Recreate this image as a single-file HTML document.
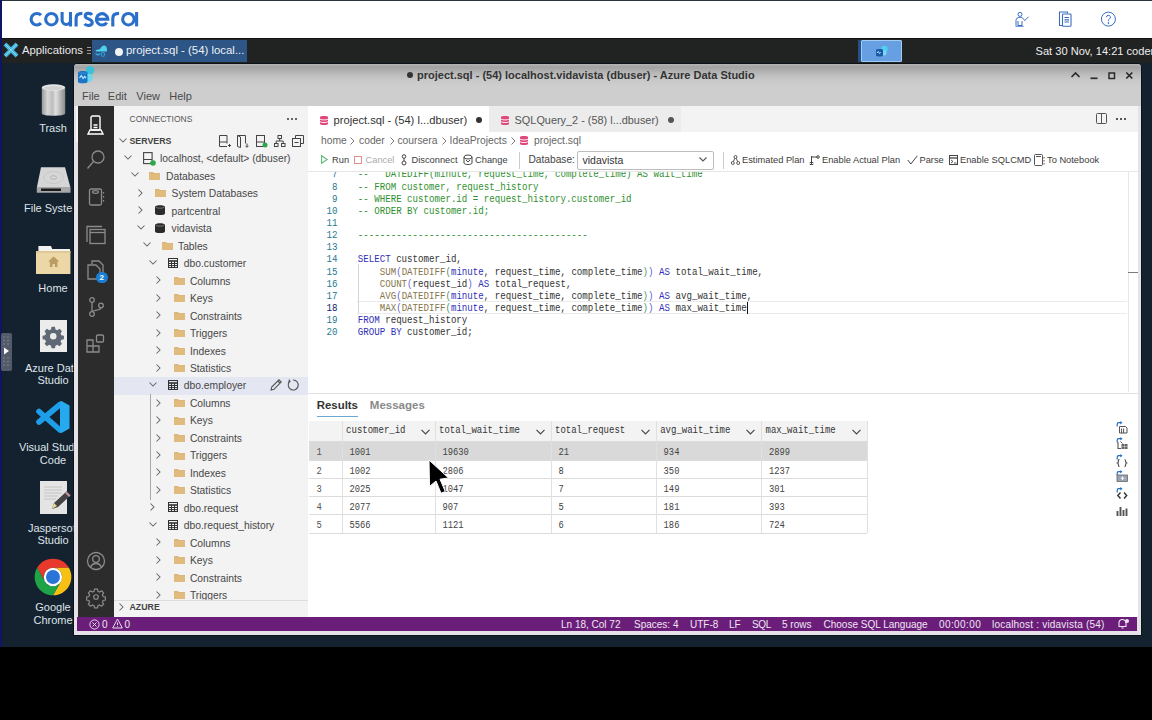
<!DOCTYPE html>
<html><head><meta charset="utf-8">
<style>
*{margin:0;padding:0;box-sizing:border-box}
html,body{width:1152px;height:720px;overflow:hidden;background:#000;font-family:"Liberation Sans",sans-serif;position:relative}
.a{position:absolute}
.t{position:absolute;white-space:pre;line-height:14px;height:14px}
.m{font-family:"Liberation Mono",monospace}
svg{position:absolute;overflow:visible}
#top{left:0;top:0;width:1152px;height:38px;background:#fff;border-top:1px solid #2a3540}
#task{left:0;top:38px;width:1152px;height:25px;background:#212222;border-top:1.5px solid #131313}
#desk{left:0;top:62px;width:1152px;height:585px;background:#142230}
#leftline{left:0;top:0;width:2px;height:647px;background:#0f1560}
.dl{color:#dfe3e8;font-size:11px;text-align:center;width:80px;left:13px}
/* window */
#win{left:74px;top:63.5px;width:1067px;height:571.5px;background:#e6e3e8;border-radius:4px 4px 0 0;box-shadow:0 0 0 1px rgba(0,0,0,.45)}
#title{left:74px;top:63.5px;width:1067px;height:22.5px;background:linear-gradient(#b4b4b4 0,#a2a2a2 14%,#bababa 45%,#c8c8c8 72%,#cdcdcd 100%);border-radius:3px 3px 0 0}
#menu{left:74px;top:86px;width:1067px;height:20px;background:#cecece}
#act{left:78px;top:106px;width:36px;height:511px;background:#2c2c2c}
#side{left:114px;top:106px;width:194px;height:511px;background:#f3f3f3}
#editor{left:308px;top:106px;width:830px;height:511px;background:#fff}
#status{left:77px;top:617px;width:1060px;height:14px;background:#6a1e7a}
.mn{font-size:11px;color:#4a4a4a;top:88.8px}
</style></head><body>
<div class="a" id="desk"></div>
<div class="a" id="top"></div>
<div class="a" id="task"></div>
<div class="a" id="leftline"></div>

<!-- coursera header -->
<svg style="left:0;top:0" width="150" height="38" viewBox="0 0 150 38" fill="none" stroke="#2a6fc9" stroke-width="3.1"><path d="M41 15.2A5.75 5.75 0 1 0 41 23.2"/><circle cx="51.4" cy="19.2" r="5.75"/><path d="M62.1 12V20.3A4.2 4.2 0 0 0 70.5 20.3M70.5 12V26.4"/><path d="M76.1 26.4V18.2Q76.1 13.4 82.4 13.4"/><path d="M92 14.8C90.6 12.9 85.2 12.6 85.2 15.9C85.2 19.2 92.3 18.5 92.3 22.6C92.3 26.1 86.3 26.1 84.6 23.9"/><path d="M96.4 19.2H107.8A5.7 5.7 0 1 0 106.8 22.6"/><path d="M112.8 26.4V18.2Q112.8 13.4 119.1 13.4"/><circle cx="128.4" cy="19.2" r="5.75"/><path d="M136.6 12V26.4"/></svg>
<svg style="left:1013px;top:11px" width="18" height="17" viewBox="0 0 18 17" fill="none" stroke="#3a6cc4" stroke-width="1"><circle cx="7" cy="3.4" r="2"/><path d="M3 14.5V9.5c0-2 1.5-3.3 4-3.3 1.6 0 2.6.6 3.3 1.6l1.5 1.8 3.7-3.8"/><path d="M5 10v4.5h4V10"/><path d="M2.5 15.2h8"/></svg>
<svg style="left:1058px;top:11px" width="15" height="16" viewBox="0 0 15 16" fill="none" stroke="#3a6cc4" stroke-width="1.1"><path d="M4 14.5H1.5V1h8v1.5"/><rect x="4.5" y="3" width="8.5" height="12.3" rx=".8"/><path d="M6.5 6.5h4.5M6.5 8.8h4.5M6.5 11h4.5" stroke-width="1.2"/></svg>
<svg style="left:1100px;top:11px" width="17" height="17" viewBox="0 0 17 17" fill="none" stroke="#3a6cc4" stroke-width="1"><circle cx="8.4" cy="8.1" r="7"/><path d="M6.4 6.3a2 2 0 1 1 2.8 1.8c-.6.3-.8.7-.8 1.5v.6"/><circle cx="8.4" cy="12" r=".5" fill="#3a6cc4"/></svg>
<!-- taskbar -->
<svg style="left:3px;top:42px" width="16" height="16" viewBox="0 0 16 16"><path d="M2 2L14 14M14 2L2 14" stroke="#45b8e2" stroke-width="4"/><path d="M2 2L14 14M14 2L2 14" stroke="#8ad4ee" stroke-width="1"/></svg>
<div class="t" style="left:22px;top:43px;font-size:11.3px;color:#e8e8e8">Applications</div>
<div class="a" style="left:87px;top:47px;width:4px;height:1px;background:#999;box-shadow:0 3px #999,0 6px #999"></div>
<div class="a" style="left:92px;top:40px;width:155px;height:22px;background:#2d5585"></div>
<svg style="left:94px;top:44px" width="14" height="14" viewBox="0 0 14 14"><path d="M1.5 7.5C1.5 5.5 5 5.2 6 5.2 7 3 8.5 1.5 10 1.5c2 0 3 2 3 4.5v1.5z" fill="#4fd0ec"/><path d="M1.5 9.5l2.5 1.5 2-1.5" stroke="#3ab0e0" stroke-width="1.3" fill="none"/><circle cx="9" cy="10.5" r="1.8" stroke="#2a9ad8" stroke-width="1.2" fill="none"/></svg>
<div class="a" style="left:114.5px;top:47.5px;width:8px;height:8px;border-radius:50%;background:#f2f2f2"></div>
<div class="t" style="left:126px;top:43px;font-size:11.4px;color:#eef2f6">project.sql - (54) local...</div>
<div class="a" style="left:858px;top:40px;width:3px;height:22px;background:#25508a"></div><div class="a" style="left:861px;top:40px;width:41px;height:22px;background:#67a0e2;border:1px solid #a2ccf4;border-radius:1px"></div><svg style="left:875px;top:44px" width="14" height="14" viewBox="0 0 14 14"><circle cx="9.5" cy="5" r="3.2" fill="#52d0f0"/><circle cx="9" cy="9" r="2.5" fill="#7ad8f2"/><path d="M1 6c0-1.3 7-1.3 7 0v5.5c0 1.3-7 1.3-7 0z" fill="#1a5aa8"/><path d="M2 9l1.3-1.5 1.3 2 1-1.2" stroke="#bfe6ff" stroke-width="1" fill="none"/></svg>
<div class="t" style="left:1035.5px;top:43.5px;font-size:11.1px;color:#eeeeee">Sat 30 Nov, 14:21 coder</div>

<!-- desktop icons -->
<svg style="left:41px;top:83px" width="25" height="34" viewBox="0 0 25 34"><defs><linearGradient id="tg" x1="0" x2="1"><stop offset="0" stop-color="#9a9a9a"/><stop offset=".25" stop-color="#d8d8d8"/><stop offset=".45" stop-color="#bdbdbd"/><stop offset=".6" stop-color="#e0e0e0"/><stop offset="1" stop-color="#8a8a8a"/></linearGradient></defs><path d="M.8 4.5h23.4v26c0 3-23.4 3-23.4 0z" fill="url(#tg)"/><ellipse cx="12.5" cy="4.5" rx="11.7" ry="3.3" fill="#e6e6e6"/><ellipse cx="12.5" cy="5" rx="10" ry="2" fill="#d2d2d2"/></svg>
<div class="t dl" style="top:121px">Trash</div>
<svg style="left:36px;top:166px" width="35" height="28" viewBox="0 0 35 28"><path d="M5 1.2h24l5.5 20.5H.8z" fill="#d6d6d6"/><ellipse cx="17.5" cy="11.5" rx="10" ry="6" fill="none" stroke="#c4c4c4" stroke-width=".8"/><ellipse cx="17.5" cy="11.5" rx="3" ry="1.8" fill="none" stroke="#aaa" stroke-width=".8"/><path d="M.8 21.7h33.7v5H.8z" fill="#a8a8a8"/><path d="M5 22.5h20v2.5H5z" fill="#1a1a1a"/></svg>
<div class="t dl" style="top:201px;left:24px;text-align:left">File Syste</div>
<svg style="left:36px;top:245px" width="35" height="30" viewBox="0 0 35 30"><path d="M2.4 1h12.6l1.2 3H34v3H2.4z" fill="#f4f2ee"/><path d="M0 6h34.4v23H0z" fill="#ecd7a6"/><path d="M0 6h34.4v2H0z" fill="#e0c898"/><path d="M17.6 11.5l-5.5 5h1.8v5.5h2.6v-3h2.4v3h2.6v-5.5h1.8z" fill="#bb9c62"/></svg>
<div class="t dl" style="top:281px">Home</div>
<div class="a" style="left:1px;top:333px;width:11px;height:38px;background:#535b68;border-radius:2px"></div>
<svg style="left:0;top:333px" width="12" height="38" viewBox="0 333 12 38"><circle cx="4" cy="337" r=".7" fill="#8a93a0"/><circle cx="4" cy="340.5" r=".7" fill="#8a93a0"/><circle cx="4" cy="344" r=".7" fill="#8a93a0"/><circle cx="4" cy="358" r=".7" fill="#8a93a0"/><circle cx="4" cy="361.5" r=".7" fill="#8a93a0"/><circle cx="4" cy="365" r=".7" fill="#8a93a0"/><circle cx="8" cy="337" r=".7" fill="#8a93a0"/><circle cx="8" cy="340.5" r=".7" fill="#8a93a0"/><circle cx="8" cy="344" r=".7" fill="#8a93a0"/><circle cx="8" cy="358" r=".7" fill="#8a93a0"/><circle cx="8" cy="361.5" r=".7" fill="#8a93a0"/><circle cx="8" cy="365" r=".7" fill="#8a93a0"/><path d="M4 347.5l5 3.5-5 3.5z" fill="#fff"/></svg>
<div class="a" style="left:40px;top:320px;width:27px;height:32px;background:#ececec"></div>
<svg style="left:43px;top:326px" width="20.5" height="20.5" viewBox="0 0 24 24"><path d="M10 1h4l.6 3 2.2 1 2.6-1.7 2.8 2.8-1.7 2.6 1 2.2 3 .6v4l-3 .6-1 2.2 1.7 2.6-2.8 2.8-2.6-1.7-2.2 1-.6 3h-4l-.6-3-2.2-1-2.6 1.7-2.8-2.8 1.7-2.6-1-2.2-3-.6v-4l3-.6 1-2.2-1.7-2.6 2.8-2.8 2.6 1.7 2.2-1z" fill="#5f6875"/><circle cx="12" cy="12" r="3.8" fill="#ececec"/></svg>
<div class="t dl" style="top:361px;left:25px;text-align:left">Azure Dat</div>
<div class="t dl" style="top:373px">Studio</div>
<svg style="left:30px;top:395px" width="45" height="45" viewBox="30 395 45 45"><path d="M39 422L60 404.5M39 411.5L60 430" stroke="#1e9ee8" stroke-width="5.6" stroke-linecap="round"/><path d="M60 401.8L61.5 401 69.5 405.5V428.5L61.5 433 60 432.2z" fill="#27a9f0"/></svg>
<div class="t dl" style="top:440px;left:19px;text-align:left">Visual Stud</div>
<div class="t dl" style="top:453px">Code</div>
<svg style="left:40px;top:481px" width="30" height="33" viewBox="0 0 30 33"><path d="M0 0h27v33H0z" fill="#e4e4e4"/><path d="M4 6h18M4 9h18M4 12h18M4 15h14M4 18h12" stroke="#b8b8b8" stroke-width=".7"/><path d="M12 28l2-6 13-12 4 4-13 12z" fill="#444"/><path d="M12 28l2-6 3 3z" fill="#e8d890"/><path d="M25 12l4 4 1.5-1.5-4-4z" fill="#c090a0"/></svg>
<div class="t dl" style="top:521px;left:28px;text-align:left">Jaspersof</div>
<div class="t dl" style="top:533px">Studio</div>
<svg style="left:31.3px;top:555.3px" width="44" height="44" viewBox="0 0 48 48"><path d="M6.68 14A20 20 0 0 1 41.32 14L24 14A10 10 0 0 0 15.34 29z" fill="#e8392c"/><path d="M41.32 14A20 20 0 0 1 24 44L32.66 29A10 10 0 0 0 24 14z" fill="#f9c014"/><path d="M24 44A20 20 0 0 1 6.68 14L15.34 29A10 10 0 0 0 32.66 29z" fill="#1fa347"/><circle cx="24" cy="24" r="10" fill="#fff"/><circle cx="24" cy="24" r="7.6" fill="#2a74d8"/></svg>
<div class="t dl" style="top:600px">Google</div>
<div class="t dl" style="top:613px">Chrome</div>

<!-- WINDOW -->
<div class="a" id="win"></div>
<div class="a" id="title"></div>
<div class="a" id="menu"></div>
<div class="a" id="act"></div>
<div class="a" id="side"></div>
<div class="a" id="editor"></div>
<div class="a" id="status"></div>
<!-- title bar -->
<svg style="left:77px;top:66px" width="18" height="18" viewBox="0 0 18 18"><circle cx="13" cy="4.3" r="4.3" fill="#3cc0d8"/><circle cx="11.5" cy="12" r="4.2" fill="#6ad8ee"/><path d="M1 6.5c0-2 9.5-2 9.5 0v9.5c0 1.8-9.5 1.8-9.5 0z" fill="#1d74c4"/><path d="M1 6.5c0 1.7 9.5 1.7 9.5 0" fill="#2a8ed8"/><path d="M2.5 12l1.8-2.5 1.8 3 1.5-2 1.5 1.5" stroke="#bfe8ff" stroke-width="1.2" fill="none"/></svg>
<div class="a" style="left:407px;top:72px;width:6px;height:6px;border-radius:50%;background:#333"></div>
<div class="t" style="left:417px;top:68px;font-size:11px;font-weight:bold;color:#333">project.sql - (54) localhost.vidavista (dbuser) - Azure Data Studio</div>
<svg style="left:1070px;top:69px" width="66" height="12" viewBox="0 0 66 12" fill="none" stroke="#2a2a2a" stroke-width="1.7"><path d="M1.5 8l4-4 4 4"/><path d="M20.5 9.3h7" /><rect x="39" y="4" width="5.5" height="5.5" stroke-width="1.5"/><path d="M56.3 3.5l6 6M62.3 3.5l-6 6"/></svg>
<!-- menu -->
<div class="t mn" style="left:82px">File</div>
<div class="t mn" style="left:107.8px">Edit</div>
<div class="t mn" style="left:136.3px">View</div>
<div class="t mn" style="left:169.3px">Help</div>
<!-- activity bar -->
<div class="a" style="left:76px;top:106px;width:2px;height:36px;background:#f4f4f4"></div>
<svg style="left:86px;top:115px" width="20" height="20" viewBox="0 0 20 20" fill="none" stroke="#fff" stroke-width="1.4"><rect x="5" y="1" width="9" height="14" rx="1.5"/><path d="M7.5 10h4M7.5 12.5h4"/><rect x="7.5" y="3.5" width="4" height="4" fill="#fff" stroke="none" opacity=".0"/><path d="M2 19l2-4h11l2 4z"/></svg>
<svg style="left:86px;top:149px" width="20" height="22" viewBox="0 0 20 22" fill="none" stroke="#8b8b8b" stroke-width="1.3"><circle cx="12" cy="8" r="6"/><path d="M7.5 12.5L1.5 19.5"/></svg>
<svg style="left:88px;top:188px" width="18" height="18" viewBox="0 0 18 18" fill="none" stroke="#8b8b8b" stroke-width="1.3"><rect x="1.5" y="1" width="12" height="16" rx="1.5"/><ellipse cx="7.5" cy="4" rx="3" ry="1.3"/><path d="M15.5 4v1.5M15.5 8v1.5M15.5 12v1.5"/></svg>
<svg style="left:86px;top:225px" width="20" height="20" viewBox="0 0 20 20" fill="none" stroke="#8b8b8b" stroke-width="1.3"><path d="M1 17V1.5h15"/><rect x="4" y="4.5" width="15" height="14"/><path d="M4 7.5h15"/></svg>
<svg style="left:86px;top:260px" width="22" height="22" viewBox="0 0 22 22" fill="none" stroke="#8b8b8b" stroke-width="1.3"><path d="M6 4V1h7l4 4v10"/><path d="M2 5h8l4 4v10H2z"/></svg>
<div class="a" style="left:96px;top:271.5px;width:11.5px;height:11.5px;border-radius:50%;background:#1a7fd4;color:#fff;font-size:8px;font-weight:bold;text-align:center;line-height:11.5px">2</div>
<svg style="left:88px;top:297px" width="16" height="20" viewBox="0 0 16 20" fill="none" stroke="#8b8b8b" stroke-width="1.3"><circle cx="4" cy="3" r="2.3"/><circle cx="4" cy="17" r="2.3"/><circle cx="13" cy="8.5" r="2.3"/><path d="M4 5.3v9.4M13 10.8c0 3-9 2-9 4"/></svg>
<svg style="left:86px;top:333px" width="20" height="20" viewBox="0 0 20 20" fill="none" stroke="#8b8b8b" stroke-width="1.3"><path d="M1 7h6v12H1zM1 13h12v6H1z"/><rect x="10.5" y="2" width="7" height="7" rx="1.2"/></svg>
<svg style="left:86px;top:551px" width="20" height="20" viewBox="0 0 20 20" fill="none" stroke="#8b8b8b" stroke-width="1.3"><circle cx="10" cy="10" r="8.5"/><circle cx="10" cy="8" r="3.3"/><path d="M4.5 16.5c1-3 3-4 5.5-4s4.5 1 5.5 4"/></svg>
<svg style="left:87px;top:588px" width="18" height="18" viewBox="0 0 24 24" fill="none" stroke="#8b8b8b" stroke-width="1.6"><path d="M10 1.5h4l.6 3 2.2 1 2.6-1.7 2.8 2.8-1.7 2.6 1 2.2 3 .6v4l-3 .6-1 2.2 1.7 2.6-2.8 2.8-2.6-1.7-2.2 1-.6 3h-4l-.6-3-2.2-1-2.6 1.7-2.8-2.8 1.7-2.6-1-2.2-3-.6v-4l3-.6 1-2.2-1.7-2.6 2.8-2.8 2.6 1.7 2.2-1z"/><circle cx="12" cy="12" r="3"/></svg>
<!--SIDE--><div class="a" style="left:114px;top:377px;width:194px;height:17.5px;background:#e4e6f1"></div>
<div class="a" style="left:150px;top:394px;width:1px;height:106px;background:#a8a8a8"></div>
<svg style="left:123.8px;top:154.8px" width="8" height="5" viewBox="0 0 8 5"><path d="M.5.5L4 4 7.5.5" fill="none" stroke="#666" stroke-width="1.05"/></svg>
<svg style="left:143.0px;top:151.8px" width="13" height="14" viewBox="0 0 13 14"><rect x=".6" y=".6" width="8.5" height="11" fill="none" stroke="#444" stroke-width="1.1"/><path d="M.6 7.5h8.5" stroke="#444" stroke-width="1"/><circle cx="10" cy="11" r="2.8" fill="#2aa84a"/></svg>
<div class="t" style="left:160.0px;top:152.2px;font-size:10.3px;color:#474747">localhost, &lt;default&gt; (dbuser)</div>
<svg style="left:130.5px;top:172.3px" width="8" height="5" viewBox="0 0 8 5"><path d="M.5.5L4 4 7.5.5" fill="none" stroke="#666" stroke-width="1.05"/></svg>
<svg style="left:149.0px;top:170.8px" width="11" height="9" viewBox="0 0 11 9"><path d="M0 1h4l1 1h6v7H0z" fill="#dcb67a"/><path d="M0 3h11v6H0z" fill="#e0bb7d"/></svg>
<div class="t" style="left:166.0px;top:169.7px;font-size:10.3px;color:#474747">Databases</div>
<svg style="left:138.3px;top:188.8px" width="5" height="8" viewBox="0 0 5 8"><path d="M.5.5L4 4 .5 7.5" fill="none" stroke="#666" stroke-width="1.05"/></svg>
<svg style="left:155.3px;top:188.3px" width="11" height="9" viewBox="0 0 11 9"><path d="M0 1h4l1 1h6v7H0z" fill="#dcb67a"/><path d="M0 3h11v6H0z" fill="#e0bb7d"/></svg>
<div class="t" style="left:171.6px;top:187.2px;font-size:10.3px;color:#474747">System Databases</div>
<svg style="left:138.3px;top:206.2px" width="5" height="8" viewBox="0 0 5 8"><path d="M.5.5L4 4 .5 7.5" fill="none" stroke="#666" stroke-width="1.05"/></svg>
<svg style="left:155.3px;top:205.2px" width="10" height="10" viewBox="0 0 10 10"><path d="M0 2c0-2.5 10-2.5 10 0v6.5c0 2-10 2-10 0z" fill="#2b2b2b"/><path d="M.8 2.3c1.5 1.2 7 1.2 8.4 0" stroke="#aaa" stroke-width=".6" fill="none"/></svg>
<div class="t" style="left:171.6px;top:204.6px;font-size:10.3px;color:#474747">partcentral</div>
<svg style="left:136.8px;top:224.7px" width="8" height="5" viewBox="0 0 8 5"><path d="M.5.5L4 4 7.5.5" fill="none" stroke="#666" stroke-width="1.05"/></svg>
<svg style="left:155.3px;top:222.7px" width="10" height="10" viewBox="0 0 10 10"><path d="M0 2c0-2.5 10-2.5 10 0v6.5c0 2-10 2-10 0z" fill="#2b2b2b"/><path d="M.8 2.3c1.5 1.2 7 1.2 8.4 0" stroke="#aaa" stroke-width=".6" fill="none"/></svg>
<div class="t" style="left:171.6px;top:222.1px;font-size:10.3px;color:#474747">vidavista</div>
<svg style="left:143.0px;top:242.2px" width="8" height="5" viewBox="0 0 8 5"><path d="M.5.5L4 4 7.5.5" fill="none" stroke="#666" stroke-width="1.05"/></svg>
<svg style="left:161.6px;top:240.7px" width="11" height="9" viewBox="0 0 11 9"><path d="M0 1h4l1 1h6v7H0z" fill="#dcb67a"/><path d="M0 3h11v6H0z" fill="#e0bb7d"/></svg>
<div class="t" style="left:178.0px;top:239.6px;font-size:10.3px;color:#474747">Tables</div>
<svg style="left:148.8px;top:259.7px" width="8" height="5" viewBox="0 0 8 5"><path d="M.5.5L4 4 7.5.5" fill="none" stroke="#666" stroke-width="1.05"/></svg>
<svg style="left:167.8px;top:257.7px" width="10" height="10" viewBox="0 0 10 10" fill="none" stroke="#333" stroke-width="1"><rect x=".5" y=".5" width="9" height="9"/><path d="M.5 3h9" stroke-width="1.6"/><path d="M.5 5.5h9M.5 7.6h9M3.5 3v6.5M6.5 3v6.5"/></svg>
<div class="t" style="left:183.8px;top:257.1px;font-size:10.3px;color:#474747">dbo.customer</div>
<svg style="left:155.6px;top:276.2px" width="5" height="8" viewBox="0 0 5 8"><path d="M.5.5L4 4 .5 7.5" fill="none" stroke="#666" stroke-width="1.05"/></svg>
<svg style="left:173.9px;top:275.7px" width="11" height="9" viewBox="0 0 11 9"><path d="M0 1h4l1 1h6v7H0z" fill="#dcb67a"/><path d="M0 3h11v6H0z" fill="#e0bb7d"/></svg>
<div class="t" style="left:189.9px;top:274.6px;font-size:10.3px;color:#474747">Columns</div>
<svg style="left:155.6px;top:293.6px" width="5" height="8" viewBox="0 0 5 8"><path d="M.5.5L4 4 .5 7.5" fill="none" stroke="#666" stroke-width="1.05"/></svg>
<svg style="left:173.9px;top:293.1px" width="11" height="9" viewBox="0 0 11 9"><path d="M0 1h4l1 1h6v7H0z" fill="#dcb67a"/><path d="M0 3h11v6H0z" fill="#e0bb7d"/></svg>
<div class="t" style="left:189.9px;top:292.0px;font-size:10.3px;color:#474747">Keys</div>
<svg style="left:155.6px;top:311.1px" width="5" height="8" viewBox="0 0 5 8"><path d="M.5.5L4 4 .5 7.5" fill="none" stroke="#666" stroke-width="1.05"/></svg>
<svg style="left:173.9px;top:310.6px" width="11" height="9" viewBox="0 0 11 9"><path d="M0 1h4l1 1h6v7H0z" fill="#dcb67a"/><path d="M0 3h11v6H0z" fill="#e0bb7d"/></svg>
<div class="t" style="left:189.9px;top:309.5px;font-size:10.3px;color:#474747">Constraints</div>
<svg style="left:155.6px;top:328.6px" width="5" height="8" viewBox="0 0 5 8"><path d="M.5.5L4 4 .5 7.5" fill="none" stroke="#666" stroke-width="1.05"/></svg>
<svg style="left:173.9px;top:328.1px" width="11" height="9" viewBox="0 0 11 9"><path d="M0 1h4l1 1h6v7H0z" fill="#dcb67a"/><path d="M0 3h11v6H0z" fill="#e0bb7d"/></svg>
<div class="t" style="left:189.9px;top:327.0px;font-size:10.3px;color:#474747">Triggers</div>
<svg style="left:155.6px;top:346.1px" width="5" height="8" viewBox="0 0 5 8"><path d="M.5.5L4 4 .5 7.5" fill="none" stroke="#666" stroke-width="1.05"/></svg>
<svg style="left:173.9px;top:345.6px" width="11" height="9" viewBox="0 0 11 9"><path d="M0 1h4l1 1h6v7H0z" fill="#dcb67a"/><path d="M0 3h11v6H0z" fill="#e0bb7d"/></svg>
<div class="t" style="left:189.9px;top:344.5px;font-size:10.3px;color:#474747">Indexes</div>
<svg style="left:155.6px;top:363.6px" width="5" height="8" viewBox="0 0 5 8"><path d="M.5.5L4 4 .5 7.5" fill="none" stroke="#666" stroke-width="1.05"/></svg>
<svg style="left:173.9px;top:363.1px" width="11" height="9" viewBox="0 0 11 9"><path d="M0 1h4l1 1h6v7H0z" fill="#dcb67a"/><path d="M0 3h11v6H0z" fill="#e0bb7d"/></svg>
<div class="t" style="left:189.9px;top:362.0px;font-size:10.3px;color:#474747">Statistics</div>
<svg style="left:148.8px;top:382.0px" width="8" height="5" viewBox="0 0 8 5"><path d="M.5.5L4 4 7.5.5" fill="none" stroke="#666" stroke-width="1.05"/></svg>
<svg style="left:167.8px;top:380.0px" width="10" height="10" viewBox="0 0 10 10" fill="none" stroke="#333" stroke-width="1"><rect x=".5" y=".5" width="9" height="9"/><path d="M.5 3h9" stroke-width="1.6"/><path d="M.5 5.5h9M.5 7.6h9M3.5 3v6.5M6.5 3v6.5"/></svg>
<div class="t" style="left:183.8px;top:379.4px;font-size:10.3px;color:#474747">dbo.employer</div>
<svg style="left:155.6px;top:398.5px" width="5" height="8" viewBox="0 0 5 8"><path d="M.5.5L4 4 .5 7.5" fill="none" stroke="#666" stroke-width="1.05"/></svg>
<svg style="left:173.9px;top:398.0px" width="11" height="9" viewBox="0 0 11 9"><path d="M0 1h4l1 1h6v7H0z" fill="#dcb67a"/><path d="M0 3h11v6H0z" fill="#e0bb7d"/></svg>
<div class="t" style="left:189.9px;top:396.9px;font-size:10.3px;color:#474747">Columns</div>
<svg style="left:155.6px;top:416.0px" width="5" height="8" viewBox="0 0 5 8"><path d="M.5.5L4 4 .5 7.5" fill="none" stroke="#666" stroke-width="1.05"/></svg>
<svg style="left:173.9px;top:415.5px" width="11" height="9" viewBox="0 0 11 9"><path d="M0 1h4l1 1h6v7H0z" fill="#dcb67a"/><path d="M0 3h11v6H0z" fill="#e0bb7d"/></svg>
<div class="t" style="left:189.9px;top:414.4px;font-size:10.3px;color:#474747">Keys</div>
<svg style="left:155.6px;top:433.5px" width="5" height="8" viewBox="0 0 5 8"><path d="M.5.5L4 4 .5 7.5" fill="none" stroke="#666" stroke-width="1.05"/></svg>
<svg style="left:173.9px;top:433.0px" width="11" height="9" viewBox="0 0 11 9"><path d="M0 1h4l1 1h6v7H0z" fill="#dcb67a"/><path d="M0 3h11v6H0z" fill="#e0bb7d"/></svg>
<div class="t" style="left:189.9px;top:431.9px;font-size:10.3px;color:#474747">Constraints</div>
<svg style="left:155.6px;top:451.0px" width="5" height="8" viewBox="0 0 5 8"><path d="M.5.5L4 4 .5 7.5" fill="none" stroke="#666" stroke-width="1.05"/></svg>
<svg style="left:173.9px;top:450.5px" width="11" height="9" viewBox="0 0 11 9"><path d="M0 1h4l1 1h6v7H0z" fill="#dcb67a"/><path d="M0 3h11v6H0z" fill="#e0bb7d"/></svg>
<div class="t" style="left:189.9px;top:449.4px;font-size:10.3px;color:#474747">Triggers</div>
<svg style="left:155.6px;top:468.4px" width="5" height="8" viewBox="0 0 5 8"><path d="M.5.5L4 4 .5 7.5" fill="none" stroke="#666" stroke-width="1.05"/></svg>
<svg style="left:173.9px;top:467.9px" width="11" height="9" viewBox="0 0 11 9"><path d="M0 1h4l1 1h6v7H0z" fill="#dcb67a"/><path d="M0 3h11v6H0z" fill="#e0bb7d"/></svg>
<div class="t" style="left:189.9px;top:466.8px;font-size:10.3px;color:#474747">Indexes</div>
<svg style="left:155.6px;top:485.9px" width="5" height="8" viewBox="0 0 5 8"><path d="M.5.5L4 4 .5 7.5" fill="none" stroke="#666" stroke-width="1.05"/></svg>
<svg style="left:173.9px;top:485.4px" width="11" height="9" viewBox="0 0 11 9"><path d="M0 1h4l1 1h6v7H0z" fill="#dcb67a"/><path d="M0 3h11v6H0z" fill="#e0bb7d"/></svg>
<div class="t" style="left:189.9px;top:484.3px;font-size:10.3px;color:#474747">Statistics</div>
<svg style="left:150.3px;top:503.4px" width="5" height="8" viewBox="0 0 5 8"><path d="M.5.5L4 4 .5 7.5" fill="none" stroke="#666" stroke-width="1.05"/></svg>
<svg style="left:167.8px;top:502.4px" width="10" height="10" viewBox="0 0 10 10" fill="none" stroke="#333" stroke-width="1"><rect x=".5" y=".5" width="9" height="9"/><path d="M.5 3h9" stroke-width="1.6"/><path d="M.5 5.5h9M.5 7.6h9M3.5 3v6.5M6.5 3v6.5"/></svg>
<div class="t" style="left:183.8px;top:501.8px;font-size:10.3px;color:#474747">dbo.request</div>
<svg style="left:148.8px;top:521.9px" width="8" height="5" viewBox="0 0 8 5"><path d="M.5.5L4 4 7.5.5" fill="none" stroke="#666" stroke-width="1.05"/></svg>
<svg style="left:167.8px;top:519.9px" width="10" height="10" viewBox="0 0 10 10" fill="none" stroke="#333" stroke-width="1"><rect x=".5" y=".5" width="9" height="9"/><path d="M.5 3h9" stroke-width="1.6"/><path d="M.5 5.5h9M.5 7.6h9M3.5 3v6.5M6.5 3v6.5"/></svg>
<div class="t" style="left:183.8px;top:519.3px;font-size:10.3px;color:#474747">dbo.request_history</div>
<svg style="left:155.6px;top:538.4px" width="5" height="8" viewBox="0 0 5 8"><path d="M.5.5L4 4 .5 7.5" fill="none" stroke="#666" stroke-width="1.05"/></svg>
<svg style="left:173.9px;top:537.9px" width="11" height="9" viewBox="0 0 11 9"><path d="M0 1h4l1 1h6v7H0z" fill="#dcb67a"/><path d="M0 3h11v6H0z" fill="#e0bb7d"/></svg>
<div class="t" style="left:189.9px;top:536.8px;font-size:10.3px;color:#474747">Columns</div>
<svg style="left:155.6px;top:555.8px" width="5" height="8" viewBox="0 0 5 8"><path d="M.5.5L4 4 .5 7.5" fill="none" stroke="#666" stroke-width="1.05"/></svg>
<svg style="left:173.9px;top:555.3px" width="11" height="9" viewBox="0 0 11 9"><path d="M0 1h4l1 1h6v7H0z" fill="#dcb67a"/><path d="M0 3h11v6H0z" fill="#e0bb7d"/></svg>
<div class="t" style="left:189.9px;top:554.2px;font-size:10.3px;color:#474747">Keys</div>
<svg style="left:155.6px;top:573.3px" width="5" height="8" viewBox="0 0 5 8"><path d="M.5.5L4 4 .5 7.5" fill="none" stroke="#666" stroke-width="1.05"/></svg>
<svg style="left:173.9px;top:572.8px" width="11" height="9" viewBox="0 0 11 9"><path d="M0 1h4l1 1h6v7H0z" fill="#dcb67a"/><path d="M0 3h11v6H0z" fill="#e0bb7d"/></svg>
<div class="t" style="left:189.9px;top:571.7px;font-size:10.3px;color:#474747">Constraints</div>
<svg style="left:155.6px;top:590.8px" width="5" height="8" viewBox="0 0 5 8"><path d="M.5.5L4 4 .5 7.5" fill="none" stroke="#666" stroke-width="1.05"/></svg>
<svg style="left:173.9px;top:590.3px" width="11" height="9" viewBox="0 0 11 9"><path d="M0 1h4l1 1h6v7H0z" fill="#dcb67a"/><path d="M0 3h11v6H0z" fill="#e0bb7d"/></svg>
<div class="t" style="left:189.9px;top:589.2px;font-size:10.3px;color:#474747">Triggers</div>
<svg style="left:270px;top:379px" width="12" height="12" viewBox="0 0 12 12" fill="none" stroke="#555" stroke-width="1.1"><path d="M1 11l.7-3L9 .8l2.2 2.2L4 10.3z"/><path d="M7.8 2l2.2 2.2"/></svg>
<svg style="left:287px;top:379px" width="12" height="12" viewBox="0 0 12 12" fill="none" stroke="#555" stroke-width="1.1"><path d="M3 2.2A5 5 0 1 0 6 1"/><path d="M1.8 .5L3 2.3 1 3.3"/></svg>
<div class="t" style="left:129.5px;top:112px;font-size:8.5px;color:#555">CONNECTIONS</div>
<div class="a" style="left:287px;top:118px;width:2px;height:2px;background:#666;box-shadow:4px 0 #666,8px 0 #666"></div>
<svg style="left:118.5px;top:138px" width="8" height="5" viewBox="0 0 8 5"><path d="M.5.5L4 4 7.5.5" fill="none" stroke="#666" stroke-width="1.05"/></svg>
<div class="t" style="left:129.5px;top:133.6px;font-size:8.8px;font-weight:bold;color:#444">SERVERS</div>
<svg style="left:219px;top:135px" width="12" height="13" viewBox="0 0 12 13" fill="none" stroke="#444" stroke-width="1"><path d="M8 11.5H.5V.5h7.5v8"/><path d="M.5 7h7.5"/><path d="M9 10.5h3M10.5 9v3"/></svg>
<svg style="left:237px;top:135px" width="12" height="13" viewBox="0 0 12 13" fill="none" stroke="#444" stroke-width="1"><path d="M.5.5h8v8M.5.5v11l3 1V2z"/><path d="M10 8.5v3.5M8.5 10.8L10 12.3l1.5-1.5"/></svg>
<svg style="left:256px;top:135px" width="12" height="13" viewBox="0 0 12 13"><rect x=".5" y=".5" width="8" height="11" fill="none" stroke="#444" stroke-width="1"/><path d="M.5 7h8" stroke="#444"/><circle cx="9" cy="10" r="2.5" fill="#2aa84a"/></svg>
<svg style="left:274px;top:135px" width="12" height="13" viewBox="0 0 12 13" fill="none" stroke="#444" stroke-width="1"><rect x="4" y=".5" width="3.5" height="3"/><rect x=".5" y="8.5" width="3.5" height="3"/><rect x="7.5" y="8.5" width="3.5" height="3"/><path d="M5.7 3.5v2.5M2.2 8.5V6h7v2.5"/></svg>
<svg style="left:292px;top:135px" width="12" height="12" viewBox="0 0 12 12" fill="none" stroke="#444" stroke-width="1"><rect x=".5" y="3.5" width="8" height="8"/><path d="M3.5 3.5V.5h8v8h-3"/><path d="M2.5 7.5h4"/></svg>
<div class="a" style="left:114px;top:600px;width:194px;height:1px;background:#ddd"></div>
<div class="a" style="left:114px;top:601px;width:194px;height:16px;background:#f3f3f3"></div>
<svg style="left:119px;top:603px" width="5" height="8" viewBox="0 0 5 8"><path d="M.5.5L4 4 .5 7.5" fill="none" stroke="#666" stroke-width="1.05"/></svg>
<div class="t" style="left:129.5px;top:600px;font-size:8.8px;font-weight:bold;color:#444;">AZURE</div>
<!--/SIDE--><!--ED--><div class="a" style="left:308px;top:106px;width:830px;height:26px;background:#f3f3f3"></div>
<div class="a" style="left:308px;top:106px;width:181px;height:26px;background:#fff"></div>
<div class="a" style="left:489px;top:106px;width:192px;height:26px;background:#ececec"></div>
<svg style="left:320px;top:115.5px" width="8" height="9" viewBox="0 0 8 9"><path d="M0 1c0-1.3 8-1.3 8 0v7c0 1.3-8 1.3-8 0z" fill="#e0457b"/><path d="M0 3.2c2 1 6 1 8 0M0 5.8c2 1 6 1 8 0" stroke="#fff" stroke-width=".9" fill="none"/></svg>
<div class="t" style="left:333.5px;top:112.5px;font-size:11.2px;color:#333">project.sql - (54) l...dbuser)</div>
<div class="a" style="left:476px;top:117px;width:6px;height:6px;border-radius:50%;background:#333"></div>
<svg style="left:501px;top:115.5px" width="8" height="9" viewBox="0 0 8 9"><path d="M0 1c0-1.3 8-1.3 8 0v7c0 1.3-8 1.3-8 0z" fill="#e0457b"/><path d="M0 3.2c2 1 6 1 8 0M0 5.8c2 1 6 1 8 0" stroke="#fff" stroke-width=".9" fill="none"/></svg>
<div class="t" style="left:514.6px;top:112.5px;font-size:10.9px;color:#555">SQLQuery_2 - (58) l...dbuser)</div>
<div class="a" style="left:668px;top:117px;width:6px;height:6px;border-radius:50%;background:#555"></div>
<svg style="left:1096px;top:113px" width="11" height="11" viewBox="0 0 11 11" fill="none" stroke="#555" stroke-width="1"><rect x=".5" y=".5" width="10" height="10" rx="1"/><path d="M5.5 .5v10"/></svg>
<div class="a" style="left:1116px;top:118px;width:2px;height:2px;background:#555;box-shadow:4px 0 #555,8px 0 #555"></div>
<div class="t" style="left:321px;top:134px;font-size:10.3px;color:#666">home</div>
<svg style="left:350px;top:137px" width="5" height="8" viewBox="0 0 5 8"><path d="M.5.5L4 4 .5 7.5" fill="none" stroke="#777" stroke-width="1"/></svg>
<svg style="left:389.5px;top:137px" width="5" height="8" viewBox="0 0 5 8"><path d="M.5.5L4 4 .5 7.5" fill="none" stroke="#777" stroke-width="1"/></svg>
<svg style="left:441.5px;top:137px" width="5" height="8" viewBox="0 0 5 8"><path d="M.5.5L4 4 .5 7.5" fill="none" stroke="#777" stroke-width="1"/></svg>
<svg style="left:510.5px;top:137px" width="5" height="8" viewBox="0 0 5 8"><path d="M.5.5L4 4 .5 7.5" fill="none" stroke="#777" stroke-width="1"/></svg>
<div class="t" style="left:359px;top:134px;font-size:10.3px;color:#666">coder</div>
<div class="t" style="left:397.4px;top:134px;font-size:10.3px;color:#666">coursera</div>
<div class="t" style="left:449.6px;top:134px;font-size:10.3px;color:#666">IdeaProjects</div>
<svg style="left:520px;top:135.5px" width="8" height="9" viewBox="0 0 8 9"><path d="M0 1c0-1.3 8-1.3 8 0v7c0 1.3-8 1.3-8 0z" fill="#e0457b"/><path d="M0 3.2c2 1 6 1 8 0M0 5.8c2 1 6 1 8 0" stroke="#fff" stroke-width=".9" fill="none"/></svg>
<div class="t" style="left:534px;top:134px;font-size:10.3px;color:#666">project.sql</div>
<svg style="left:321px;top:155px" width="7" height="9" viewBox="0 0 7 9"><path d="M.6.8L6.2 4.5.6 8.2z" fill="none" stroke="#5fb97a" stroke-width="1.1"/></svg>
<div class="t" style="left:332px;top:153px;font-size:9.3px;color:#3c3c3c">Run</div>
<div class="a" style="left:354px;top:156px;width:8px;height:8px;border:1px solid #e39090"></div>
<div class="t" style="left:365.5px;top:153px;font-size:9.3px;color:#aaa">Cancel</div>
<svg style="left:400px;top:154px" width="8" height="12" viewBox="0 0 8 12" fill="none" stroke="#444" stroke-width="1"><circle cx="4" cy="2.5" r="1.8"/><circle cx="4" cy="9" r="2"/><path d="M4 4.3v2.7"/></svg>
<div class="t" style="left:411.5px;top:153px;font-size:9.3px;color:#3c3c3c">Disconnect</div>
<svg style="left:463px;top:154px" width="10" height="12" viewBox="0 0 10 12" fill="none" stroke="#444" stroke-width="1"><ellipse cx="5" cy="3" rx="4" ry="2"/><path d="M1 3v6c0 2 8 2 8 0V3"/><path d="M3 6l2 2 2-2"/></svg>
<div class="t" style="left:475px;top:153px;font-size:9.3px;color:#3c3c3c">Change</div>
<div class="a" style="left:519px;top:152px;width:1px;height:17px;background:#ccc"></div>
<div class="t" style="left:528.5px;top:153px;font-size:10.2px;color:#444">Database:</div>
<div class="a" style="left:577px;top:151px;width:137px;height:18.5px;border:1px solid #bdbdbd;border-radius:2px;background:#fff"></div>
<div class="t" style="left:582.5px;top:153px;font-size:10.5px;color:#333">vidavista</div>
<svg style="left:699px;top:157px" width="8" height="5" viewBox="0 0 8 5"><path d="M.5.5L4 4 7.5.5" fill="none" stroke="#555" stroke-width="1.1"/></svg>
<div class="a" style="left:723px;top:152px;width:1px;height:17px;background:#ccc"></div>
<svg style="left:731px;top:155px" width="9" height="10" viewBox="0 0 9 10" fill="none" stroke="#444" stroke-width=".9"><circle cx="4.5" cy="2" r="1.5"/><circle cx="1.8" cy="8" r="1.5"/><circle cx="7.2" cy="8" r="1.5"/><path d="M3.7 3.3L2.4 6.6M5.3 3.3l1.3 3.3"/></svg>
<div class="t" style="left:742px;top:153px;font-size:9.3px;color:#3c3c3c">Estimated Plan</div>
<svg style="left:810px;top:155px" width="10" height="10" viewBox="0 0 10 10" fill="none" stroke="#444" stroke-width="1"><path d="M1.5 1v8M1.5 2h6"/><circle cx="8" cy="2" r="1.3"/><rect x=".3" y="7.5" width="2.4" height="2"/></svg>
<div class="t" style="left:822px;top:153px;font-size:9.3px;color:#3c3c3c">Enable Actual Plan</div>
<svg style="left:907px;top:155px" width="11" height="10" viewBox="0 0 11 10" fill="none" stroke="#444" stroke-width="1"><path d="M.8 5l3 4L10.3 .8"/></svg>
<div class="t" style="left:919.5px;top:153px;font-size:9.3px;color:#3c3c3c">Parse</div>
<svg style="left:949px;top:155px" width="9" height="10" viewBox="0 0 9 10"><rect x=".5" y=".5" width="8" height="9" fill="none" stroke="#444"/><path d="M.5 3h8" stroke="#444" stroke-width="1.3"/><path d="M2 5l2 1.5L2 8M5 8h2.5" stroke="#444" stroke-width=".9" fill="none"/></svg>
<div class="t" style="left:960px;top:153px;font-size:9.3px;color:#3c3c3c">Enable SQLCMD</div>
<svg style="left:1034px;top:154px" width="11" height="12" viewBox="0 0 11 12" fill="none" stroke="#444" stroke-width=".9"><rect x=".5" y=".5" width="8" height="11" rx="1"/><path d="M2 2.5h5M10 3v1.5M10 6v1.5M10 9v1.5"/></svg>
<div class="t" style="left:1047px;top:153px;font-size:9.3px;color:#3c3c3c">To Notebook</div>
<div class="a" style="left:308px;top:171px;width:830px;height:1px;background:#e6e6e6"></div>
<!--/ED--><!--CODE--><div class="a" style="left:308px;top:172px;width:830px;height:220px;overflow:hidden">
<div class="a" style="left:49px;top:129.20px;width:770px;height:12.8px;border-top:1px solid #eaeaea;border-bottom:1px solid #eaeaea"></div>
<div class="a" style="left:49.8px;top:92.05px;width:1px;height:48.60px;background:#d4d4d4"></div>
<div class="t m" style="left:0;width:29.5px;text-align:right;top:-2.62px;height:12.15px;line-height:12.15px;font-size:9.15px;color:#237893;transform:scaleY(1.15)">7</div>
<div class="t m" style="left:49.8px;top:-2.62px;height:12.15px;line-height:12.15px;font-size:9.15px;transform:scaleY(1.15)"><span style="color:#2f902f">--   DATEDIFF(minute, request_time, complete_time) AS wait_time</span></div>
<div class="t m" style="left:0;width:29.5px;text-align:right;top:9.53px;height:12.15px;line-height:12.15px;font-size:9.15px;color:#237893;transform:scaleY(1.15)">8</div>
<div class="t m" style="left:49.8px;top:9.53px;height:12.15px;line-height:12.15px;font-size:9.15px;transform:scaleY(1.15)"><span style="color:#2f902f">-- FROM customer, request_history</span></div>
<div class="t m" style="left:0;width:29.5px;text-align:right;top:21.68px;height:12.15px;line-height:12.15px;font-size:9.15px;color:#237893;transform:scaleY(1.15)">9</div>
<div class="t m" style="left:49.8px;top:21.68px;height:12.15px;line-height:12.15px;font-size:9.15px;transform:scaleY(1.15)"><span style="color:#2f902f">-- WHERE customer.id = request_history.customer_id</span></div>
<div class="t m" style="left:0;width:29.5px;text-align:right;top:33.83px;height:12.15px;line-height:12.15px;font-size:9.15px;color:#237893;transform:scaleY(1.15)">10</div>
<div class="t m" style="left:49.8px;top:33.83px;height:12.15px;line-height:12.15px;font-size:9.15px;transform:scaleY(1.15)"><span style="color:#2f902f">-- ORDER BY customer.id;</span></div>
<div class="t m" style="left:0;width:29.5px;text-align:right;top:45.98px;height:12.15px;line-height:12.15px;font-size:9.15px;color:#237893;transform:scaleY(1.15)">11</div>
<div class="t m" style="left:49.8px;top:45.98px;height:12.15px;line-height:12.15px;font-size:9.15px;transform:scaleY(1.15)"></div>
<div class="t m" style="left:0;width:29.5px;text-align:right;top:58.13px;height:12.15px;line-height:12.15px;font-size:9.15px;color:#237893;transform:scaleY(1.15)">12</div>
<div class="t m" style="left:49.8px;top:58.13px;height:12.15px;line-height:12.15px;font-size:9.15px;transform:scaleY(1.15)"><span style="color:#2f902f">------------------------------------------</span></div>
<div class="t m" style="left:0;width:29.5px;text-align:right;top:70.28px;height:12.15px;line-height:12.15px;font-size:9.15px;color:#237893;transform:scaleY(1.15)">13</div>
<div class="t m" style="left:49.8px;top:70.28px;height:12.15px;line-height:12.15px;font-size:9.15px;transform:scaleY(1.15)"></div>
<div class="t m" style="left:0;width:29.5px;text-align:right;top:82.42px;height:12.15px;line-height:12.15px;font-size:9.15px;color:#237893;transform:scaleY(1.15)">14</div>
<div class="t m" style="left:49.8px;top:82.42px;height:12.15px;line-height:12.15px;font-size:9.15px;transform:scaleY(1.15)"><span style="color:#3030b8">SELECT</span><span style="color:#333"> customer_id,</span></div>
<div class="t m" style="left:0;width:29.5px;text-align:right;top:94.58px;height:12.15px;line-height:12.15px;font-size:9.15px;color:#237893;transform:scaleY(1.15)">15</div>
<div class="t m" style="left:49.8px;top:94.58px;height:12.15px;line-height:12.15px;font-size:9.15px;transform:scaleY(1.15)"><span style="color:#333">    </span><span style="color:#85764c">SUM</span><span style="color:#6a62d0">(</span><span style="color:#85764c">DATEDIFF</span><span style="color:#4a9a6a">(</span><span style="color:#3030b8">minute</span><span style="color:#333">, request_time, complete_time</span><span style="color:#4a9a6a">)</span><span style="color:#6a62d0">)</span><span style="color:#333"> </span><span style="color:#3030b8">AS</span><span style="color:#333"> total_wait_time,</span></div>
<div class="t m" style="left:0;width:29.5px;text-align:right;top:106.72px;height:12.15px;line-height:12.15px;font-size:9.15px;color:#237893;transform:scaleY(1.15)">16</div>
<div class="t m" style="left:49.8px;top:106.72px;height:12.15px;line-height:12.15px;font-size:9.15px;transform:scaleY(1.15)"><span style="color:#333">    </span><span style="color:#85764c">COUNT</span><span style="color:#6a62d0">(</span><span style="color:#333">request_id</span><span style="color:#6a62d0">)</span><span style="color:#333"> </span><span style="color:#3030b8">AS</span><span style="color:#333"> total_request,</span></div>
<div class="t m" style="left:0;width:29.5px;text-align:right;top:118.88px;height:12.15px;line-height:12.15px;font-size:9.15px;color:#237893;transform:scaleY(1.15)">17</div>
<div class="t m" style="left:49.8px;top:118.88px;height:12.15px;line-height:12.15px;font-size:9.15px;transform:scaleY(1.15)"><span style="color:#333">    </span><span style="color:#85764c">AVG</span><span style="color:#6a62d0">(</span><span style="color:#85764c">DATEDIFF</span><span style="color:#4a9a6a">(</span><span style="color:#3030b8">minute</span><span style="color:#333">, request_time, complete_time</span><span style="color:#4a9a6a">)</span><span style="color:#6a62d0">)</span><span style="color:#333"> </span><span style="color:#3030b8">AS</span><span style="color:#333"> avg_wait_time,</span></div>
<div class="t m" style="left:0;width:29.5px;text-align:right;top:131.03px;height:12.15px;line-height:12.15px;font-size:9.15px;color:#0b216f;transform:scaleY(1.15)">18</div>
<div class="t m" style="left:49.8px;top:131.03px;height:12.15px;line-height:12.15px;font-size:9.15px;transform:scaleY(1.15)"><span style="color:#333">    </span><span style="color:#85764c">MAX</span><span style="color:#6a62d0">(</span><span style="color:#85764c">DATEDIFF</span><span style="color:#4a9a6a">(</span><span style="color:#3030b8">minute</span><span style="color:#333">, request_time, complete_time</span><span style="color:#4a9a6a">)</span><span style="color:#6a62d0">)</span><span style="color:#333"> </span><span style="color:#3030b8">AS</span><span style="color:#333"> max_wait_time</span></div>
<div class="t m" style="left:0;width:29.5px;text-align:right;top:143.17px;height:12.15px;line-height:12.15px;font-size:9.15px;color:#237893;transform:scaleY(1.15)">19</div>
<div class="t m" style="left:49.8px;top:143.17px;height:12.15px;line-height:12.15px;font-size:9.15px;transform:scaleY(1.15)"><span style="color:#3030b8">FROM</span><span style="color:#333"> request_history</span></div>
<div class="t m" style="left:0;width:29.5px;text-align:right;top:155.33px;height:12.15px;line-height:12.15px;font-size:9.15px;color:#237893;transform:scaleY(1.15)">20</div>
<div class="t m" style="left:49.8px;top:155.33px;height:12.15px;line-height:12.15px;font-size:9.15px;transform:scaleY(1.15)"><span style="color:#3030b8">GROUP BY</span><span style="color:#333"> customer_id;</span></div>
<div class="a" style="left:439.09px;top:129.50px;width:1px;height:12.5px;background:#111"></div>
<div class="a" style="left:819.5px;top:0;width:1px;height:220px;background:#e6e6e6"></div>
<div class="a" style="left:820px;top:99.8px;width:10px;height:1.2px;background:#7a7a7a"></div>
</div>
<!--/CODE--><!--RES--><div class="a" style="left:308px;top:393px;width:830px;height:1px;background:#e3e3e3"></div>
<div class="t" style="left:316.8px;top:397.5px;font-size:11.4px;font-weight:bold;color:#333">Results</div>
<div class="a" style="left:317px;top:415.5px;width:41px;height:1.5px;background:#6ea8d2"></div>
<div class="t" style="left:369.8px;top:397.5px;font-size:11.5px;font-weight:bold;color:#8a8a8a">Messages</div>
<div class="a" style="left:308.8px;top:421px;width:558.2px;height:20.4px;background:#f3f3f3"></div>
<div class="a" style="left:308.8px;top:441.4px;width:558.2px;height:18.8px;background:#d9d9d9"></div>
<div class="a" style="left:308.8px;top:440.9px;width:558.2px;height:1px;background:#dcdcdc"></div>
<div class="a" style="left:308.8px;top:459.7px;width:558.2px;height:1px;background:#dcdcdc"></div>
<div class="a" style="left:308.8px;top:477.9px;width:558.2px;height:1px;background:#dcdcdc"></div>
<div class="a" style="left:308.8px;top:496.0px;width:558.2px;height:1px;background:#dcdcdc"></div>
<div class="a" style="left:308.8px;top:514.2px;width:558.2px;height:1px;background:#dcdcdc"></div>
<div class="a" style="left:308.8px;top:532.5px;width:558.2px;height:1px;background:#dcdcdc"></div>
<div class="a" style="left:341.8px;top:421px;width:1px;height:112px;background:#e0e0e0"></div>
<div class="a" style="left:434.7px;top:421px;width:1px;height:112px;background:#e0e0e0"></div>
<div class="a" style="left:550.7px;top:421px;width:1px;height:112px;background:#e0e0e0"></div>
<div class="a" style="left:655.9px;top:421px;width:1px;height:112px;background:#e0e0e0"></div>
<div class="a" style="left:761.2px;top:421px;width:1px;height:112px;background:#e0e0e0"></div>
<div class="a" style="left:866.5px;top:421px;width:1px;height:112px;background:#e0e0e0"></div>
<div class="t m" style="left:346.1px;top:423.5px;font-size:9px;color:#333;transform:scaleY(1.15)">customer_id</div>
<svg style="left:420.8px;top:429px" width="9" height="6" viewBox="0 0 9 6"><path d="M.5.8L4.5 5 8.5.8" fill="none" stroke="#444" stroke-width="1.1"/></svg>
<div class="t m" style="left:439.0px;top:423.5px;font-size:9px;color:#333;transform:scaleY(1.15)">total_wait_time</div>
<svg style="left:535.7px;top:429px" width="9" height="6" viewBox="0 0 9 6"><path d="M.5.8L4.5 5 8.5.8" fill="none" stroke="#444" stroke-width="1.1"/></svg>
<div class="t m" style="left:555.0px;top:423.5px;font-size:9px;color:#333;transform:scaleY(1.15)">total_request</div>
<svg style="left:640.9px;top:429px" width="9" height="6" viewBox="0 0 9 6"><path d="M.5.8L4.5 5 8.5.8" fill="none" stroke="#444" stroke-width="1.1"/></svg>
<div class="t m" style="left:660.2px;top:423.5px;font-size:9px;color:#333;transform:scaleY(1.15)">avg_wait_time</div>
<svg style="left:746.2px;top:429px" width="9" height="6" viewBox="0 0 9 6"><path d="M.5.8L4.5 5 8.5.8" fill="none" stroke="#444" stroke-width="1.1"/></svg>
<div class="t m" style="left:765.5px;top:423.5px;font-size:9px;color:#333;transform:scaleY(1.15)">max_wait_time</div>
<svg style="left:851.5px;top:429px" width="9" height="6" viewBox="0 0 9 6"><path d="M.5.8L4.5 5 8.5.8" fill="none" stroke="#444" stroke-width="1.1"/></svg>
<div class="t m" style="left:316.5px;top:446.0px;font-size:8.8px;color:#555;transform:scaleY(1.22)">1</div>
<div class="t m" style="left:349.5px;top:446.0px;font-size:8.8px;color:#444;transform:scaleY(1.22)">1001</div>
<div class="t m" style="left:442.4px;top:446.0px;font-size:8.8px;color:#444;transform:scaleY(1.22)">19630</div>
<div class="t m" style="left:558.4px;top:446.0px;font-size:8.8px;color:#444;transform:scaleY(1.22)">21</div>
<div class="t m" style="left:663.6px;top:446.0px;font-size:8.8px;color:#444;transform:scaleY(1.22)">934</div>
<div class="t m" style="left:768.9px;top:446.0px;font-size:8.8px;color:#444;transform:scaleY(1.22)">2899</div>
<div class="t m" style="left:316.5px;top:464.5px;font-size:8.8px;color:#555;transform:scaleY(1.22)">2</div>
<div class="t m" style="left:349.5px;top:464.5px;font-size:8.8px;color:#444;transform:scaleY(1.22)">1002</div>
<div class="t m" style="left:442.4px;top:464.5px;font-size:8.8px;color:#444;transform:scaleY(1.22)">2806</div>
<div class="t m" style="left:558.4px;top:464.5px;font-size:8.8px;color:#444;transform:scaleY(1.22)">8</div>
<div class="t m" style="left:663.6px;top:464.5px;font-size:8.8px;color:#444;transform:scaleY(1.22)">350</div>
<div class="t m" style="left:768.9px;top:464.5px;font-size:8.8px;color:#444;transform:scaleY(1.22)">1237</div>
<div class="t m" style="left:316.5px;top:482.6px;font-size:8.8px;color:#555;transform:scaleY(1.22)">3</div>
<div class="t m" style="left:349.5px;top:482.6px;font-size:8.8px;color:#444;transform:scaleY(1.22)">2025</div>
<div class="t m" style="left:442.4px;top:482.6px;font-size:8.8px;color:#444;transform:scaleY(1.22)">1047</div>
<div class="t m" style="left:558.4px;top:482.6px;font-size:8.8px;color:#444;transform:scaleY(1.22)">7</div>
<div class="t m" style="left:663.6px;top:482.6px;font-size:8.8px;color:#444;transform:scaleY(1.22)">149</div>
<div class="t m" style="left:768.9px;top:482.6px;font-size:8.8px;color:#444;transform:scaleY(1.22)">301</div>
<div class="t m" style="left:316.5px;top:500.8px;font-size:8.8px;color:#555;transform:scaleY(1.22)">4</div>
<div class="t m" style="left:349.5px;top:500.8px;font-size:8.8px;color:#444;transform:scaleY(1.22)">2077</div>
<div class="t m" style="left:442.4px;top:500.8px;font-size:8.8px;color:#444;transform:scaleY(1.22)">907</div>
<div class="t m" style="left:558.4px;top:500.8px;font-size:8.8px;color:#444;transform:scaleY(1.22)">5</div>
<div class="t m" style="left:663.6px;top:500.8px;font-size:8.8px;color:#444;transform:scaleY(1.22)">181</div>
<div class="t m" style="left:768.9px;top:500.8px;font-size:8.8px;color:#444;transform:scaleY(1.22)">393</div>
<div class="t m" style="left:316.5px;top:519.1px;font-size:8.8px;color:#555;transform:scaleY(1.22)">5</div>
<div class="t m" style="left:349.5px;top:519.1px;font-size:8.8px;color:#444;transform:scaleY(1.22)">5566</div>
<div class="t m" style="left:442.4px;top:519.1px;font-size:8.8px;color:#444;transform:scaleY(1.22)">1121</div>
<div class="t m" style="left:558.4px;top:519.1px;font-size:8.8px;color:#444;transform:scaleY(1.22)">6</div>
<div class="t m" style="left:663.6px;top:519.1px;font-size:8.8px;color:#444;transform:scaleY(1.22)">186</div>
<div class="t m" style="left:768.9px;top:519.1px;font-size:8.8px;color:#444;transform:scaleY(1.22)">724</div>
<svg style="left:1116px;top:421.0px" width="12" height="13" viewBox="0 0 12 13"><path d="M1.2 5.5V3.2c0-1 .6-1.5 1.5-1.5H5" stroke="#1f6fc5" stroke-width="1.2" fill="none"/><path d="M4.3 0l2.2 1.7-2.2 1.7z" fill="#1f6fc5"/><path d="M3.5 5.5h6l1.5 1.5v5H3.5z" fill="none" stroke="#555" stroke-width="1"/><path d="M5.6 7.5v4.5M7.6 7.5v4.5" stroke="#555" stroke-width="1"/></svg>
<svg style="left:1116px;top:436.5px" width="12" height="13" viewBox="0 0 12 13"><path d="M1.2 5.5V3.2c0-1 .6-1.5 1.5-1.5H5" stroke="#1f6fc5" stroke-width="1.2" fill="none"/><path d="M4.3 0l2.2 1.7-2.2 1.7z" fill="#1f6fc5"/><path d="M2 5v6.5h3" stroke="#555" stroke-width="1.1" fill="none"/><path d="M4.5 4.5l2 2" stroke="#555"/><rect x="5.5" y="7" width="6" height="5" fill="#666"/><path d="M5.5 9.5h6M8.5 7v5" stroke="#ccc" stroke-width=".6"/></svg>
<svg style="left:1116px;top:453.5px" width="12" height="13" viewBox="0 0 12 13"><path d="M1.2 5.5V3.2c0-1 .6-1.5 1.5-1.5H5" stroke="#1f6fc5" stroke-width="1.2" fill="none"/><path d="M4.3 0l2.2 1.7-2.2 1.7z" fill="#1f6fc5"/><path d="M3.5 5.5c-1.2 0-1.2.8-1.2 2s-.8 1.5-.8 1.5.8.3.8 1.5.1 2 1.2 2M8.5 5.5c1.2 0 1.2.8 1.2 2s.8 1.5.8 1.5-.8.3-.8 1.5-.1 2-1.2 2" stroke="#444" stroke-width="1.1" fill="none"/></svg>
<svg style="left:1116px;top:470.0px" width="12" height="13" viewBox="0 0 12 13"><path d="M1.2 5.5V3.2c0-1 .6-1.5 1.5-1.5H5" stroke="#1f6fc5" stroke-width="1.2" fill="none"/><path d="M4.3 0l2.2 1.7-2.2 1.7z" fill="#1f6fc5"/><rect x="1" y="5" width="10.5" height="6.5" fill="#9aa4b4" stroke="#666" stroke-width=".8"/><path d="M6.5 6.5v3.5M4.8 8.2h3.5" stroke="#fff" stroke-width="1"/></svg>
<svg style="left:1116px;top:486.5px" width="12" height="13" viewBox="0 0 12 13"><path d="M1.2 5.5V3.2c0-1 .6-1.5 1.5-1.5H5" stroke="#1f6fc5" stroke-width="1.2" fill="none"/><path d="M4.3 0l2.2 1.7-2.2 1.7z" fill="#1f6fc5"/><path d="M4.5 5.5L1.8 8.5l2.7 3M8 5.5l2.7 3L8 11.5" stroke="#333" stroke-width="1.4" fill="none"/></svg>
<svg style="left:1116px;top:504.0px" width="12" height="13" viewBox="0 0 12 13"><path d="M1.5 12V7M4.5 12V3M7.5 12V6M10.5 12V4.5" stroke="#555" stroke-width="1.9"/></svg>
<svg style="left:427px;top:458px" width="24" height="38" viewBox="427 458 24 38"><path d="M429 460L448.5 478 440 479.2 445.3 491.5 441 493.2 436 481 429.5 486.5z" fill="#000" stroke="#fff" stroke-width="1"/></svg>
<!--/RES--><!--ST--><svg style="left:89px;top:618.5px" width="11" height="11" viewBox="0 0 11 11" fill="none" stroke="#e8d8ee" stroke-width="1"><circle cx="5.5" cy="5.5" r="4.6"/><path d="M3.5 3.5l4 4M7.5 3.5l-4 4"/></svg>
<div class="t" style="left:102px;top:617.8px;font-size:10px;color:#f0e6f2">0</div>
<svg style="left:111.5px;top:618px" width="11" height="11" viewBox="0 0 11 11" fill="none" stroke="#e8d8ee" stroke-width="1"><path d="M5.5 1L10.3 10H.7z"/><path d="M5.5 4.5v2.5M5.5 8v.8"/></svg>
<div class="t" style="left:124.5px;top:617.8px;font-size:10px;color:#f0e6f2">0</div>
<div class="t" style="left:561px;top:617.8px;font-size:10px;color:#f0e6f2;letter-spacing:0px">Ln 18, Col 72</div>
<div class="t" style="left:634px;top:617.8px;font-size:10px;color:#f0e6f2;letter-spacing:0px">Spaces: 4</div>
<div class="t" style="left:690px;top:617.8px;font-size:10px;color:#f0e6f2;letter-spacing:0px">UTF-8</div>
<div class="t" style="left:729px;top:617.8px;font-size:10px;color:#f0e6f2;letter-spacing:0px">LF</div>
<div class="t" style="left:752px;top:617.8px;font-size:10px;color:#f0e6f2;letter-spacing:-0.4px">SQL</div>
<div class="t" style="left:782px;top:617.8px;font-size:10px;color:#f0e6f2;letter-spacing:0px">5 rows</div>
<div class="t" style="left:823.5px;top:617.8px;font-size:10px;color:#f0e6f2;letter-spacing:0px">Choose SQL Language</div>
<div class="t" style="left:939px;top:617.8px;font-size:10px;color:#f0e6f2;letter-spacing:0.4px">00:00:00</div>
<div class="t" style="left:992px;top:617.8px;font-size:10px;color:#f0e6f2;letter-spacing:0.2px">localhost : vidavista (54)</div>
<svg style="left:1117px;top:618px" width="11" height="11" viewBox="0 0 11 11" fill="none" stroke="#f0e6f2" stroke-width="1.1"><path d="M2 8.5V5a3.5 3.5 0 0 1 7 0v3.5H1.5h8"/><path d="M4.5 10h2"/></svg>
<div class="a" style="left:1124.5px;top:618.5px;width:4px;height:4px;border-radius:50%;background:#f0e6f2"></div>
<!--/ST--><!--CONTENT-->
</body></html>
